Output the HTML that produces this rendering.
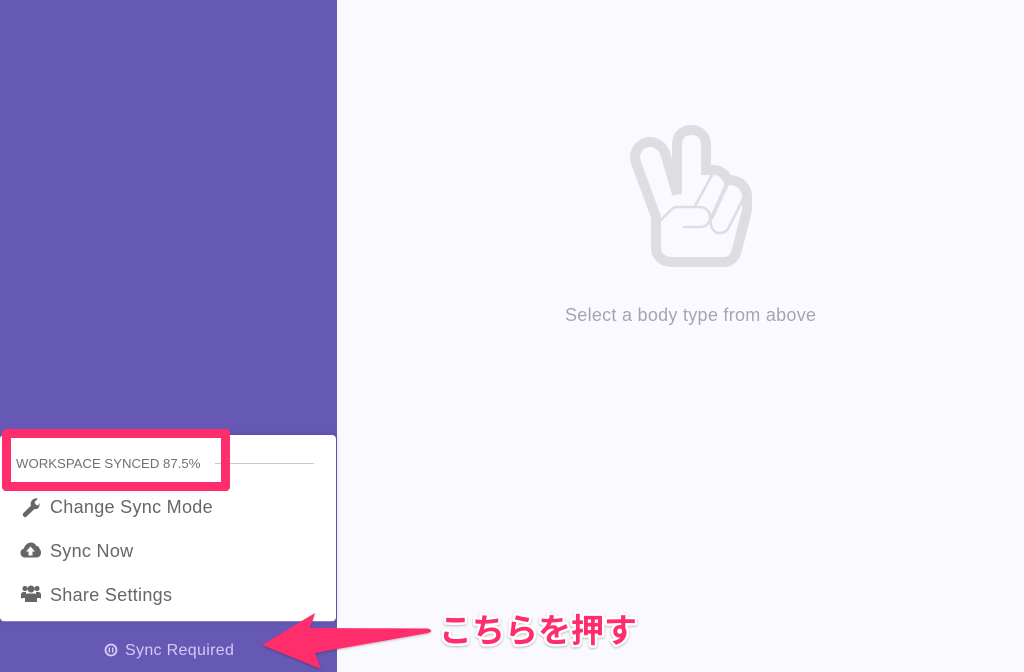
<!DOCTYPE html>
<html lang="ja"><head><meta charset="utf-8"><title>Sync</title>
<style>
html,body{margin:0;padding:0;width:1024px;height:672px;overflow:hidden;background:#faf9ff;font-family:"Liberation Sans","Noto Sans CJK JP",sans-serif}
#side{position:absolute;left:0;top:0;width:337px;height:672px;background:#6559b5}
#card{position:absolute;left:0;top:435px;width:336px;height:186px;background:#fff;border-radius:4px;box-shadow:0 1px 0 #8a7fd0,0 0 6px rgba(0,0,0,.15)}
.t{position:absolute;white-space:nowrap;color:#666}
.m{font-size:18px;left:50px;line-height:22px;letter-spacing:.3px}
#line{position:absolute;left:215px;top:463px;width:99px;height:1px;background:#c8c8c8}
#box{position:absolute;left:2px;top:429px;width:210px;height:44px;border:9px solid #ff2d6b;border-radius:4px}
svg{position:absolute;left:0;top:0}
</style></head><body>
<div id="side"></div>
<div id="card"></div>
<div id="line"></div>
<div class="t" style="left:16px;top:456px;font-size:13.2px;line-height:16px;color:#707070">WORKSPACE SYNCED 87.5%</div>
<div class="t m" style="top:496px">Change Sync Mode</div>
<div class="t m" style="top:540px">Sync Now</div>
<div class="t m" style="top:584px">Share Settings</div>
<div class="t" style="left:125px;top:642px;font-size:16px;line-height:18px;letter-spacing:.33px;color:#d3caf8">Sync Required</div>
<div class="t" style="left:565px;top:304px;font-size:18px;line-height:22px;letter-spacing:.28px;color:#a5a5ab">Select a body type from above</div>
<div id="box"></div>
<svg width="1024" height="672" viewBox="0 0 1024 672">
  <!-- hand -->
  <g fill="none" stroke="#dedee2" stroke-linejoin="round" stroke-linecap="round">
    <path stroke-width="10" stroke-linejoin="miter" d="M656 217L636.500 164C632 152 640 142 650 142C657 142 663 147 665 153L677 194V145C677 135 683 130 691.500 130C700 130 706 136 706 145V170H714C720 170 725 174 728 180C740 180 747 187 747 197V210L737 250C735 258 730 262 724 262H672C662 262 656 256 656 248V217Z"/>
    <path stroke-width="2.600" d="M661 220L672 209Q674 207 678 207H700C706 207 710 212 710 217C710 223 706 227 700 227H684"/>
    <path stroke-width="2.600" d="M695 206L712 175"/>
    <path stroke-width="4" d="M727 184L712 217"/>
    <path stroke-width="2.600" d="M711 218C709 226 714 233 719 233C723 233 727 232 729 227L743 199"/>
  </g>
  <!-- wrench -->
  <path fill="#666" d="M23 513.500L31 505.500C29.500 501 33.500 497.500 38 498.500L34.500 502L35.500 504.500L38 505.500L39.500 503C40 506.500 38 510 34.500 509L26 517C24.500 518 22 515.500 23 513.500Z"/>
  <!-- cloud upload -->
  <path fill="#666" d="M25 557.500C22 557.500 20.500 555 20.500 553C20.500 550.500 22 549 24 548.500C24.500 545 28 542.500 31 542.500C33.500 542.500 35.500 544 36.500 546C38.500 546 39.500 547.500 39.500 549C41 550 41 552 41 553C41 555.500 39 557.500 36.500 557.500Z"/>
  <path fill="#fff" d="M30.500 546.500L35 551.500H32.500V555.500H28.500V551.500H26Z"/>
  <!-- users -->
  <g fill="#666">
    <circle cx="25" cy="588.500" r="2.600"/><circle cx="37" cy="588.500" r="2.600"/><circle cx="31" cy="589" r="3.500"/>
    <path d="M21 599V595C21 593 22 592 24 592H26V598H22ZM41 599V595C41 593 40 592 38 592H36V598H40Z"/>
    <path d="M25 602V597C25 594 27 593.500 28 593.500H34C35 593.500 37 594 37 597V602Z"/>
  </g>
  <!-- pause circle -->
  <circle cx="111" cy="650" r="5.500" fill="none" stroke="#d6cdf8" stroke-width="1.800"/>
  <path d="M109.300 647.500V652.500M112.700 647.500V652.500" stroke="#d6cdf8" stroke-width="1.500"/>
  <!-- arrow -->
  <path fill="#ff2d6b" d="M262 645L315 613L310 628L428 628.500Q432 630 431 631Q431 632 428 633L315 653L321 669Z" style="filter:drop-shadow(0 1px 1px rgba(0,0,0,.25))"/>
  <text x="439" y="642" font-size="33" font-weight="700" fill="#ff2d6b" stroke="#fff" stroke-width="5" stroke-linejoin="round" paint-order="stroke" font-family="'Liberation Sans','Noto Sans CJK JP',sans-serif" style="filter:drop-shadow(0 1px 1px rgba(0,0,0,.25))">こちらを押す</text>
</svg>
</body></html>
